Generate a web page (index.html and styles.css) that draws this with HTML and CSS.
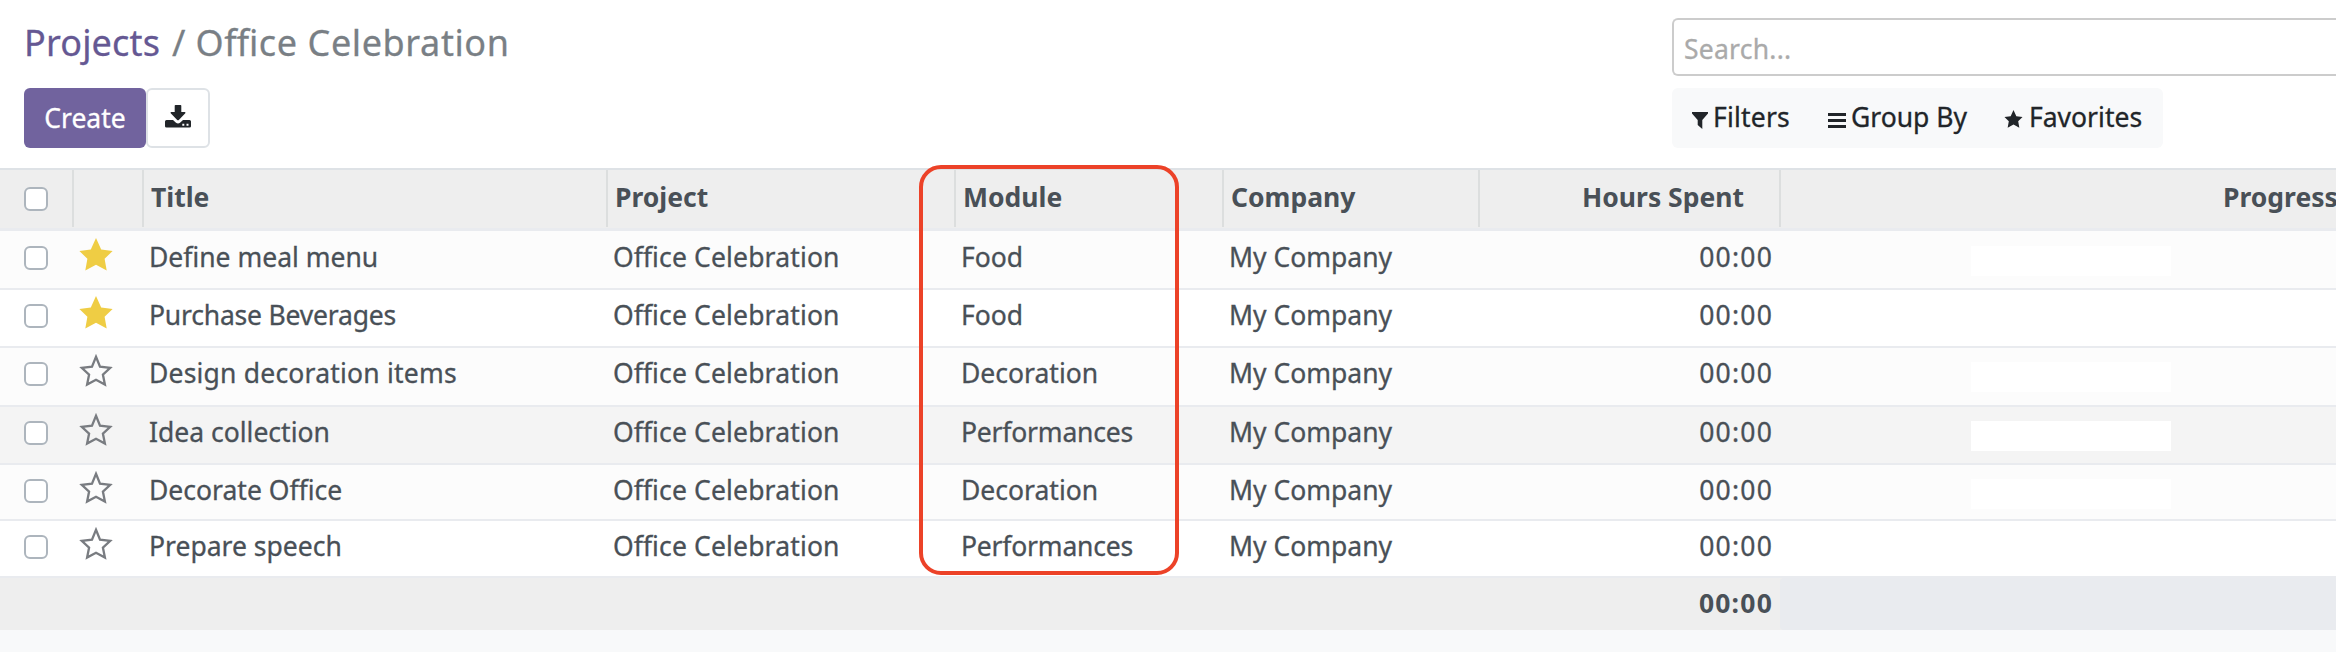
FILE: index.html
```html
<!DOCTYPE html>
<html lang="en">
<head>
<meta charset="utf-8">
<title>Office Celebration</title>
<link rel="stylesheet" href="styles.css">
</head>
<body>
<svg class="defs" width="0" height="0">
  <symbol id="star" viewBox="0 0 34 33"><path d="M17 0 22.2 11.6 33.6 13 25.6 20.8 27.7 32.6 17 26.8 6.3 32.6 8.4 20.8 .4 13 11.8 11.6Z"/></symbol>
  <symbol id="star-o" viewBox="0 0 34 33"><path d="M17 2.8 21 12.6 31.2 13.9 23.9 20.6 25.9 30.6 17 25.7 8.1 30.6 10.1 20.6 2.8 13.9 13 12.6Z" fill="none" stroke="currentColor" stroke-width="2.3"/></symbol>
</svg>
<header class="panel">
  <div class="left">
    <h1 class="crumbs"><a>Projects</a><span class="sep">/</span><span class="current">Office Celebration</span></h1>
    <div class="buttons">
      <button class="create">Create</button>
      <button class="export" aria-label="Export"><svg width="26" height="23" viewBox="0 0 26 23" fill="#212529"><path d="M10.5 0h5q.8 0 .8.8V7h3.5q1.2.2.5 1.3L13.8 15q-.8.6-1.6 0L5.700 8.300Q5 7.200 6.200 7H9.700V.8q0-.8.8-.8Z"/><path fill-rule="evenodd" d="M1.500 15H8l3 2.800q2 1.500 4 0L18 15h6.500q1.500 0 1.500 1.500v4.700Q26 22.600 24.500 22.600h-23Q0 22.600 0 21.200v-4.700Q0 15 1.500 15ZM17.300 18.800v2h2v-2Zm4.200 0v2h2v-2Z"/></svg></button>
    </div>
  </div>
  <div class="right">
    <div class="search">Search...</div>
    <div class="options">
      <span class="opt filters"><svg width="16" height="17" viewBox="0 0 16 17"><path d="M0 0h16v1.500L10.300 8v9L5.700 13V8L0 1.500Z"/></svg>Filters</span>
      <span class="opt group"><svg width="18" height="15" viewBox="0 0 18 15"><path d="M0 0h18v3H0ZM0 6h18v3H0ZM0 12h18v3H0Z"/></svg>Group By</span>
      <span class="opt favs"><svg width="19" height="18"><use href="#star"/></svg>Favorites</span>
    </div>
  </div>
</header>
<main class="list">
  <div class="row head">
    <div class="c"><i class="box"></i></div><div class="c"></div><div class="c title">Title</div><div class="c proj">Project</div><div class="c mod">Module</div><div class="c comp">Company</div><div class="c hours">Hours Spent</div><div class="c progress">Progress</div>
  </div>
  <div class="row first odd"><div class="c"><i class="box"></i></div><div class="c"><svg class="star on"><use href="#star"/></svg></div><div class="c t">Define meal menu</div><div class="c p">Office Celebration</div><div class="c t">Food</div><div class="c t">My Company</div><div class="c h">00:00</div><div class="c g"><i class="bar"></i></div></div>
  <div class="row"><div class="c"><i class="box"></i></div><div class="c"><svg class="star on"><use href="#star"/></svg></div><div class="c t narrow">Purchase Beverages</div><div class="c p">Office Celebration</div><div class="c t">Food</div><div class="c t">My Company</div><div class="c h">00:00</div><div class="c g"><i class="bar"></i></div></div>
  <div class="row odd tall"><div class="c"><i class="box"></i></div><div class="c"><svg class="star"><use href="#star-o"/></svg></div><div class="c t wide">Design decoration items</div><div class="c p">Office Celebration</div><div class="c t">Decoration</div><div class="c t">My Company</div><div class="c h">00:00</div><div class="c g"><i class="bar"></i></div></div>
  <div class="row hover"><div class="c"><i class="box"></i></div><div class="c"><svg class="star"><use href="#star-o"/></svg></div><div class="c t">Idea collection</div><div class="c p">Office Celebration</div><div class="c t narrow">Performances</div><div class="c t">My Company</div><div class="c h">00:00</div><div class="c g"><i class="bar"></i></div></div>
  <div class="row odd short"><div class="c"><i class="box"></i></div><div class="c"><svg class="star"><use href="#star-o"/></svg></div><div class="c t">Decorate Office</div><div class="c p">Office Celebration</div><div class="c t">Decoration</div><div class="c t">My Company</div><div class="c h">00:00</div><div class="c g"><i class="bar"></i></div></div>
  <div class="row last"><div class="c"><i class="box"></i></div><div class="c"><svg class="star"><use href="#star-o"/></svg></div><div class="c t">Prepare speech</div><div class="c p">Office Celebration</div><div class="c t narrow">Performances</div><div class="c t">My Company</div><div class="c h">00:00</div><div class="c g"><i class="bar"></i></div></div>
  <div class="foot"><div class="total">00:00</div><div class="rest"></div></div>
  <div class="highlight"></div>
</main>
</body>
</html>
```
FILE: styles.css
```css
* { box-sizing: border-box; }
html { background: #f8f9fa; }
body { margin: 0; width: 2336px; height: 652px; overflow: hidden; background: #f8f9fa; font: 26.5px/36px "Noto Sans", "Open Sans", sans-serif; color: #495057; font-feature-settings: "liga" 1; -webkit-text-stroke: .3px; }
.defs { position: absolute; }

.panel { display: grid; grid-template-columns: 1648px 1fr; height: 168px; padding-left: 24px; background: #fff; }
.crumbs { margin: 0; height: 88px; padding-top: 19px; font-size: 36px; line-height: 48px; font-weight: 400; color: #797f85; display: flex; }
.crumbs a { color: #655893; letter-spacing: .15px; }
.sep { margin: 0 10px 0 12px; }
.current { letter-spacing: .6px; }
.buttons { display: flex; }
button { font: inherit; height: 60px; border-radius: 6px; padding: 0; }
.create { width: 122px; background: #71639e; border: 0; color: #fff; }
.export { width: 64px; background: #fff; border: 2px solid #dee2e6; display: flex; justify-content: center; padding-top: 15px; }
.search { margin-top: 18px; height: 58px; border: 2px solid #ccc; border-right: 0; border-radius: 6px 0 0 6px; padding: 11px 0 0 10px; color: #aaa; letter-spacing: .25px; }
.options { display: flex; width: 491px; height: 60px; margin-top: 12px; padding: 11px 0 0 20px; border-radius: 6px; background: #f8f9fa; color: #212529; }
.opt { display: flex; white-space: nowrap; }
.opt svg { fill: currentColor; margin-top: 13px; }
.filters { width: 136px; gap: 5px; letter-spacing: .2px; }
.group { width: 176px; gap: 5px; }
.group svg { margin-top: 14px; }
.favs { gap: 6px; }
.favs svg { margin-top: 11px; }

.list { position: relative; }
.row { display: grid; grid-template-columns: 74px 70px 464px 348px 268px 256px 301px 555px; height: 58px; border-bottom: 2px solid #e9ebef; background: #fff; }
.c { white-space: nowrap; padding-top: 7px; }
.odd { background: #fcfcfc; }
.hover { background: #f4f4f4; }
.first { height: 59px; padding-top: 1px; }
.tall { height: 59px; }
.short { height: 56px; }
.last { height: 57px; }
.t, .p { padding-left: 5px; }
.p { letter-spacing: .15px; }
.narrow { letter-spacing: -.2px; }
.wide { letter-spacing: .2px; }
.h { text-align: right; padding-right: 8px; letter-spacing: 1.2px; }
.box { display: block; width: 24px; height: 24px; margin: 7px 0 0 24px; border: 2px solid #adb5bd; border-radius: 6px; background: #fff; }
.star { display: block; width: 34px; height: 33px; margin: -1px 0 0 5px; color: #797c81; }
.star.on { fill: #efcd44; }
.bar { display: block; width: 200px; height: 30px; margin: 7px 0 0 190px; background: #fff; }

.head { height: 63px; background: #eee; border-top: 2px solid #dee2e6; border-bottom: 3px solid #e9ebef; font-weight: 700; -webkit-text-stroke: 0; }
.head .c { height: 57px; padding: 9px 0 0 7px; border-right: 2px solid #dcdede; }
.head .c:first-child { padding-left: 0; }
.head .box { margin-top: 8px; }
.head .hours { text-align: right; padding-right: 35px; }
.head .progress { padding-left: 442px; border: 0; overflow: hidden; }

.foot { display: grid; grid-template-columns: 1780px 1fr; height: 52px; background: #eee; font-weight: 700; -webkit-text-stroke: 0; }
.total { text-align: right; padding: 7px 7px 0 0; letter-spacing: 1.2px; }
.rest { background: #e9ebef; border-radius: 4px 0 0 4px; }
.highlight { position: absolute; left: 919px; top: -3px; width: 260px; height: 410px; border: 4px solid #ec4228; border-radius: 22px; }
```
